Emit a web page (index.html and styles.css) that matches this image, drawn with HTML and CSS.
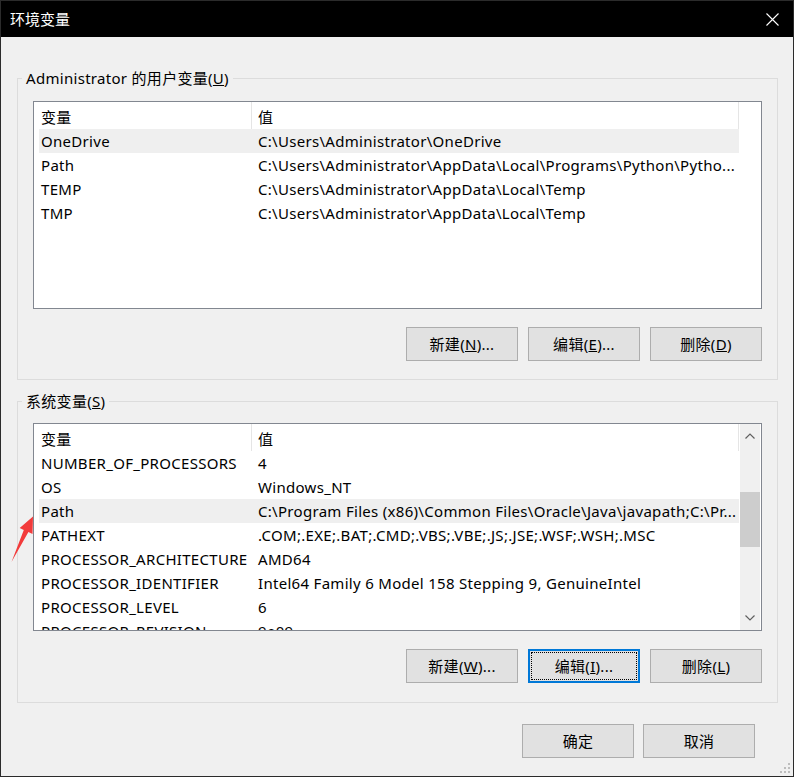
FILE: index.html
```html
<!DOCTYPE html>
<html lang="zh-CN">
<head>
<meta charset="utf-8">
<title>环境变量</title>
<link rel="stylesheet" href="styles.css">
</head>
<body>
<div class="window">
  <div class="titlebar">
    <span class="title">环境变量</span>
    <span class="close">
      <svg width="13" height="13" viewBox="0 0 13 13"><path d="M0.5 0.5 L12.5 12.5 M12.5 0.5 L0.5 12.5" stroke="#fff" stroke-width="1.1" fill="none"/></svg>
    </span>
  </div>
  <div class="content">
    <fieldset class="group">
      <legend>Administrator 的用户变量(<u>U</u>)</legend>
      <div class="group-body">
        <div class="list">
          <div class="list-main">
            <div class="list-head"><div class="hcell c1">变量</div><div class="hcell c2">值</div></div>
            <div class="row sel"><div class="cell c1">OneDrive</div><div class="cell c2">C:\Users\Administrator\OneDrive</div></div>
            <div class="row"><div class="cell c1">Path</div><div class="cell c2">C:\Users\Administrator\AppData\Local\Programs\Python\Pytho...</div></div>
            <div class="row"><div class="cell c1">TEMP</div><div class="cell c2">C:\Users\Administrator\AppData\Local\Temp</div></div>
            <div class="row"><div class="cell c1">TMP</div><div class="cell c2">C:\Users\Administrator\AppData\Local\Temp</div></div>
          </div>
        </div>
        <div class="btns">
          <button class="btn">新建(<u>N</u>)...</button>
          <button class="btn">编辑(<u>E</u>)...</button>
          <button class="btn">删除(<u>D</u>)</button>
        </div>
      </div>
    </fieldset>
    <fieldset class="group group-sys">
      <legend>系统变量(<u>S</u>)</legend>
      <div class="group-body">
        <div class="list">
          <div class="list-main">
            <div class="list-head"><div class="hcell c1">变量</div><div class="hcell c2">值</div></div>
            <div class="row"><div class="cell c1">NUMBER_OF_PROCESSORS</div><div class="cell c2">4</div></div>
            <div class="row"><div class="cell c1">OS</div><div class="cell c2">Windows_NT</div></div>
            <div class="row sel"><div class="cell c1">Path</div><div class="cell c2">C:\Program Files (x86)\Common Files\Oracle\Java\javapath;C:\Pr...</div></div>
            <div class="row"><div class="cell c1">PATHEXT</div><div class="cell c2">.COM;.EXE;.BAT;.CMD;.VBS;.VBE;.JS;.JSE;.WSF;.WSH;.MSC</div></div>
            <div class="row"><div class="cell c1">PROCESSOR_ARCHITECTURE</div><div class="cell c2">AMD64</div></div>
            <div class="row"><div class="cell c1">PROCESSOR_IDENTIFIER</div><div class="cell c2">Intel64 Family 6 Model 158 Stepping 9, GenuineIntel</div></div>
            <div class="row"><div class="cell c1">PROCESSOR_LEVEL</div><div class="cell c2">6</div></div>
            <div class="row"><div class="cell c1">PROCESSOR_REVISION</div><div class="cell c2">9e09</div></div>
          </div>
          <div class="vscroll">
            <div class="sb-btn">
              <svg width="10" height="6" viewBox="0 0 10 6"><path d="M0.5 5.5 L5 1 L9.5 5.5" stroke="#606060" stroke-width="1.2" fill="none"/></svg>
            </div>
            <div class="sb-track"><div class="sb-thumb"></div></div>
            <div class="sb-btn">
              <svg width="10" height="6" viewBox="0 0 10 6"><path d="M0.5 0.5 L5 5 L9.5 0.5" stroke="#606060" stroke-width="1.2" fill="none"/></svg>
            </div>
          </div>
        </div>
        <div class="btns">
          <button class="btn">新建(<u>W</u>)...</button>
          <button class="btn focus">编辑(<u>I</u>)...</button>
          <button class="btn">删除(<u>L</u>)</button>
        </div>
      </div>
    </fieldset>
    <div class="footer">
      <button class="btn">确定</button>
      <button class="btn">取消</button>
    </div>
  </div>
  <svg class="grip" width="12" height="12" viewBox="0 0 12 12">
    <rect x="9" y="1" width="2" height="2" fill="#bdbdbd"/>
    <rect x="5" y="5" width="2" height="2" fill="#bdbdbd"/>
    <rect x="9" y="5" width="2" height="2" fill="#bdbdbd"/>
    <rect x="1" y="9" width="2" height="2" fill="#bdbdbd"/>
    <rect x="5" y="9" width="2" height="2" fill="#bdbdbd"/>
    <rect x="9" y="9" width="2" height="2" fill="#bdbdbd"/>
  </svg>
  <svg class="arrow" width="40" height="70" viewBox="0 505 40 70">
    <polygon points="33,516.5 32.5,534 28.4,532 11.5,562 23.8,530 19.7,528" fill="#f23b3b"/>
  </svg>
</div>
</body>
</html>
```

FILE: styles.css
```css
* { box-sizing: border-box; }

html, body {
  margin: 0;
  padding: 0;
  background: #f0f0f0;
}

body {
  font-family: "Noto Sans", "Noto Sans CJK SC", sans-serif;
  font-size: 15px;
  letter-spacing: 0.3px;
  color: #000;
}

.window {
  position: relative;
  width: 794px;
  height: 777px;
  border: 1px solid #2b2b2b;
  background: #f0f0f0;
  overflow: hidden;
}

.titlebar {
  height: 36px;
  background: #000;
  color: #fff;
  display: flex;
  align-items: center;
  justify-content: space-between;
  padding: 0 14px 0 9px;
}

.title {
  font-family: "Noto Sans CJK SC", sans-serif;
  font-size: 15px;
  letter-spacing: 0;
  line-height: 20px;
}

.close {
  display: flex;
  width: 13px;
  height: 13px;
  margin-top: 1px;
}

.content {
  padding: 31px 15px 0 16px;
}

.group {
  margin: 0;
  padding: 0;
  border: 1px solid #dcdcdc;
  min-width: 0;
}

.group legend {
  margin-left: 4px;
  padding: 0 4px;
  line-height: 20px;
  height: 20px;
  white-space: nowrap;
}

.group-body {
  padding: 13px 15px 18px;
}

.group-sys {
  margin-top: 11px;
}

.group-sys .group-body {
  padding-top: 12px;
  padding-bottom: 19px;
}

.list {
  height: 208px;
  background: #fff;
  border: 1px solid #828790;
  display: flex;
  overflow: hidden;
}

.list-main {
  flex: 1;
  min-width: 0;
  overflow: hidden;
}

.list-head {
  display: flex;
  height: 27px;
}

.hcell {
  border-right: 1px solid #e5e5e5;
  line-height: 24px;
  padding-top: 3px;
  white-space: nowrap;
  overflow: hidden;
}

.hcell.c1 { width: 218px; padding-left: 7px; }
.hcell.c2 { width: 487px; padding-left: 6px; }

.row {
  display: flex;
  margin-left: 5px;
  width: 700px;
  height: 24px;
  line-height: 24px;
}

.row.sel { background: #efefef; }

.cell {
  white-space: nowrap;
  overflow: hidden;
}

.cell.c1 { width: 213px; padding-left: 2px; }
.cell.c2 { width: 487px; padding-left: 6px; }

.vscroll {
  width: 20px;
  margin-right: 1px;
  background: #f0f0f0;
  display: flex;
  flex-direction: column;
}

.sb-btn {
  height: 24px;
  display: flex;
  align-items: center;
  justify-content: center;
}

.sb-track {
  flex: 1;
}

.sb-thumb {
  margin-top: 44px;
  height: 55px;
  background: #cdcdcd;
}

.btns {
  display: flex;
  justify-content: flex-end;
  gap: 10px;
  margin-top: 18px;
}

.btn {
  width: 112px;
  height: 34px;
  margin: 0;
  padding: 0;
  background: #e1e1e1;
  border: 1px solid #adadad;
  font-family: "Noto Sans", "Noto Sans CJK SC", sans-serif;
  font-size: 15px;
  letter-spacing: 0.3px;
  color: #000;
  line-height: 20px;
}

.btn.focus {
  border-color: #0078d7;
  box-shadow: inset 0 0 0 1px #0078d7;
  outline: 1px dotted #000;
  outline-offset: -4px;
}

.footer {
  display: flex;
  justify-content: flex-end;
  gap: 9px;
  margin-top: 21px;
  padding-right: 23px;
}

.grip {
  position: absolute;
  right: 2px;
  bottom: 2px;
}

.arrow {
  position: absolute;
  left: -1px;
  top: 504px;
}
```
